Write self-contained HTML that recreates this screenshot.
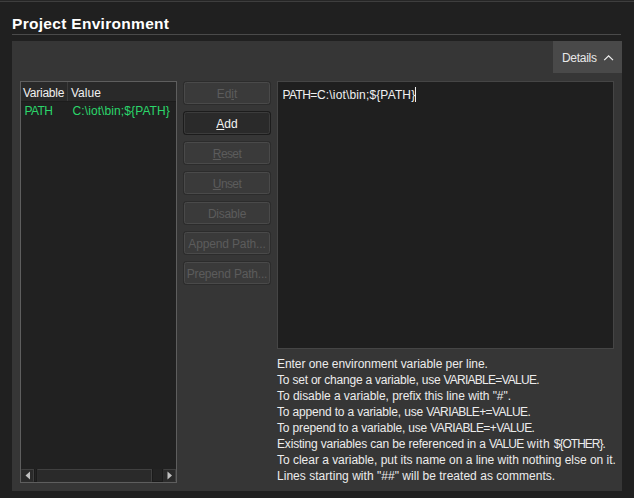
<!DOCTYPE html>
<html><head><meta charset="utf-8">
<style>
*{margin:0;padding:0;box-sizing:border-box}
html,body{width:634px;height:498px;overflow:hidden;background:#202020;font-family:"Liberation Sans",sans-serif;font-size:12px;color:#e6e6e6}
.a{position:absolute;white-space:nowrap}
#topline{left:0;top:1px;width:634px;height:1px;background:#3e3e3e}
#top0{left:0;top:0;width:634px;height:1px;background:#262626}
#title{left:12px;top:14px;font-size:15.5px;letter-spacing:0.3px;font-weight:bold;color:#fff;line-height:20px}
#uline{left:12px;top:34px;width:609px;height:1px;background:#4a4a4a}
#panel{left:12px;top:41px;width:610px;height:450px;background:#363636}
#details{left:553px;top:41px;width:69px;height:32px;background:#494949}
#dtxt{left:562px;top:50px;line-height:16px;color:#e8e8e8;letter-spacing:-0.3px}
#table{left:20px;top:81px;width:157px;height:402px;border:1px solid #5e5e5e;background:#212121}
#thead{left:21px;top:82px;width:155px;height:20px;background:#292929;border-bottom:1px solid #1c1c1c}
#tdiv{left:67px;top:82px;width:1px;height:19px;background:#3c3c3c}
.hd{top:85px;line-height:16px;color:#f0f0f0}
.gr{top:103px;line-height:16px;color:#2bd66b}
#sb{left:21px;top:469px;width:155px;height:13px;background:#232323;border-bottom:1px solid #1b1b1b}
.sbb{position:absolute;top:469px;height:13px;background:#2a2a2a;border:1px solid #404040;border-left-color:#2c2c2c;border-bottom-color:#2c2c2c}
.btn{position:absolute;left:184px;width:86px;height:22px;border:1px solid #4a4a4a;border-radius:2.5px;background:#3a3a3a;box-shadow:0 0 0 1px #2c2c2c;color:#5c5c5c;text-align:center;line-height:22px}
#add{background:#2a2a2a;border-color:#3c3c3c;box-shadow:0 0 0 1px #1c1c1c;color:#f4f4f4}
#ta{left:277px;top:81px;width:337px;height:268px;border:1px solid #454545;background:#1f1f1f}
#tatxt{left:282.5px;top:87px;line-height:16px;color:#f0f0f0}
#cursor{left:415px;top:87px;width:1px;height:15px;background:#f0f0f0}
#help{left:277px;top:356px;line-height:16px;color:#ececec;white-space:pre}
#help div{height:16px}
</style></head><body>
<div class="a" id="top0"></div><div class="a" id="topline"></div>
<div class="a" id="title">Project Environment</div>
<div class="a" id="uline"></div>
<div class="a" id="panel"></div>
<div class="a" id="details"></div>
<div class="a" id="dtxt">Details</div>
<svg class="a" style="left:603px;top:53px" width="12" height="9" viewBox="0 0 12 9"><path d="M1.2 7.1 L5.6 2.9 L10.0 7.1" fill="none" stroke="#f0f0f0" stroke-width="1.25"/></svg>
<div class="a" id="table"></div>
<div class="a" id="thead"></div>
<div class="a" id="tdiv"></div>
<div class="a hd" id="h1" style="left:23px;letter-spacing:-0.25px">Variable</div>
<div class="a hd" id="h2" style="left:71px">Value</div>
<div class="a gr" id="g1" style="left:24.5px;letter-spacing:-0.6px">PATH</div>
<div class="a gr" id="g2" style="left:72.5px;letter-spacing:0.1px">C:\iot\bin;${PATH}</div>
<div class="a" id="sb"></div>
<div class="sbb" style="left:21px;width:13px"></div>
<div class="sbb" style="left:37px;width:115px"></div>
<div class="sbb" style="left:163px;width:13px"></div>
<div class="a" style="left:34px;top:469px;width:1px;height:13px;background:#1b1b1b"></div><div class="a" style="left:36px;top:469px;width:1px;height:13px;background:#1b1b1b"></div><div class="a" style="left:152px;top:469px;width:1px;height:13px;background:#1b1b1b"></div><div class="a" style="left:162px;top:469px;width:1px;height:13px;background:#1b1b1b"></div>
<svg class="a" style="left:21px;top:469px" width="13" height="13"><path d="M4.5 6.5 L9 2.5 L9 10.5 Z" fill="#c0c0c0"/></svg>
<svg class="a" style="left:163px;top:469px" width="13" height="13"><path d="M9 6.5 L4.5 2.5 L4.5 10.5 Z" fill="#c0c0c0"/></svg>
<div class="btn" id="edit" style="top:82px">Ed<u>i</u>t</div>
<div class="btn" id="add" style="top:112px"><u>A</u>dd</div>
<div class="btn" id="reset" style="top:142px;letter-spacing:-0.6px"><u>R</u>eset</div>
<div class="btn" id="unset" style="top:172px;letter-spacing:-0.6px"><u>U</u>nset</div>
<div class="btn" id="disable" style="top:202px;letter-spacing:-0.28px">Disable</div>
<div class="btn" id="append" style="top:232px;letter-spacing:-0.15px">Append Path...</div>
<div class="btn" id="prepend" style="top:262px;letter-spacing:-0.2px">Prepend Path...</div>
<div class="a" id="ta"></div>
<div class="a" id="tatxt"><span style="letter-spacing:-0.6px">PATH</span><span style="letter-spacing:-0.3px">=</span><span id="tat2" style="letter-spacing:0.15px">C:\iot\bin;${PATH}</span></div>
<div class="a" id="cursor"></div>
<div class="a" id="help"><div style="letter-spacing:-0.05px">Enter one environment variable per line.</div><div><span style="letter-spacing:-0.21px">To set or change a variable, use </span><span id="u2" style="letter-spacing:-0.76px">VARIABLE=VALUE.</span></div><div style="letter-spacing:-0.04px">To disable a variable, prefix this line with "#".</div><div><span style="letter-spacing:-0.17px">To append to a variable, use </span><span id="u4" style="letter-spacing:-0.6px">VARIABLE+=VALUE.</span></div><div><span style="letter-spacing:-0.16px">To prepend to a variable, use </span><span id="u5" style="letter-spacing:-0.6px">VARIABLE=+VALUE.</span></div><div><span style="letter-spacing:-0.18px">Existing variables can be referenced in a </span><span id="u6" style="letter-spacing:-0.8px">VALUE</span><span id="w6" style="letter-spacing:0.4px"> with </span><span id="u6b" style="letter-spacing:-1.0px">${OTHER}.</span></div><div style="letter-spacing:-0.02px">To clear a variable, put its name on a line with nothing else on it.</div><div style="letter-spacing:0.03px">Lines starting with "##" will be treated as comments.</div></div>
</body></html>
